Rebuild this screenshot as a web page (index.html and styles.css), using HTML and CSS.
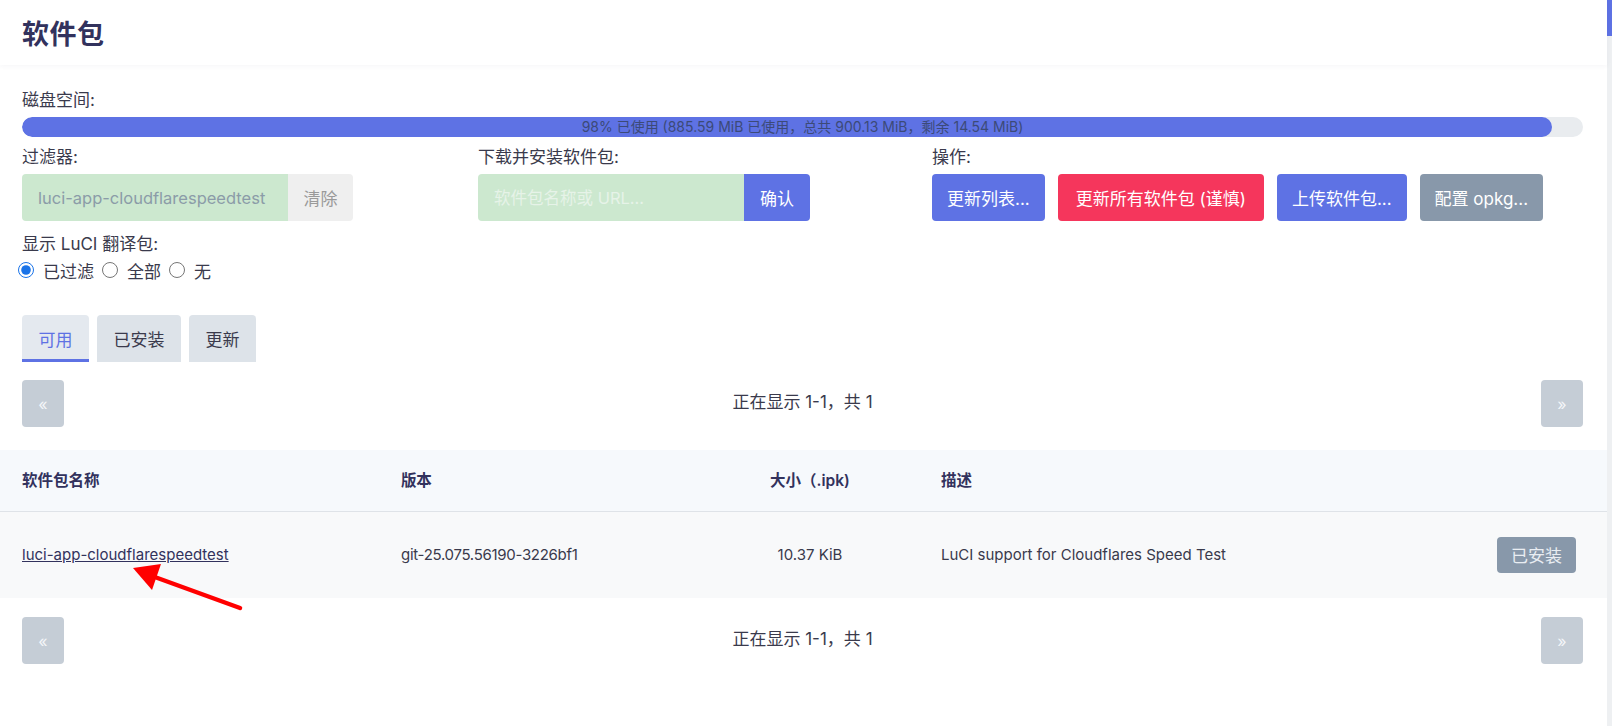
FILE: index.html
```html
<!DOCTYPE html>
<html lang="zh-CN">
<head>
<meta charset="utf-8">
<title>软件包</title>
<link rel="stylesheet" href="styles.css">
</head>
<body>
<div class="app">
  <div class="page">
    <header class="topbar">
      <h2 class="title">软件包</h2>
    </header>

    <div class="content">
      <div class="disk">
        <div class="field-label">磁盘空间:</div>
        <div class="meter">
          <div class="meter-fill" style="width:98%"></div>
          <span class="meter-text">98% 已使用 (885.59 MiB 已使用，总共 900.13 MiB，剩余 14.54 MiB)</span>
        </div>
      </div>

      <div class="controls">
        <div class="ctl">
          <div class="field-label">过滤器:</div>
          <div class="group">
            <input class="txt txt-filter" type="text" value="luci-app-cloudflarespeedtest">
            <button class="btn btn-clear">清除</button>
          </div>
        </div>
        <div class="ctl">
          <div class="field-label">下载并安装软件包:</div>
          <div class="group">
            <input class="txt txt-url" type="text" placeholder="软件包名称或 URL...">
            <button class="btn btn-primary btn-attached">确认</button>
          </div>
        </div>
        <div class="ctl">
          <div class="field-label">操作:</div>
          <div class="actions">
            <button class="btn btn-primary">更新列表...</button>
            <button class="btn btn-danger">更新所有软件包 (谨慎)</button>
            <button class="btn btn-primary">上传软件包...</button>
            <button class="btn btn-neutral">配置 opkg...</button>
          </div>
        </div>
        <div class="ctl ctl-i18n">
          <div class="field-label">显示 LuCI 翻译包:</div>
          <div class="radios">
            <label class="radio"><input type="radio" name="i18n" checked>已过滤</label>
            <label class="radio"><input type="radio" name="i18n">全部</label>
            <label class="radio"><input type="radio" name="i18n">无</label>
          </div>
        </div>
      </div>

      <ul class="tabs">
        <li class="tab active">可用</li>
        <li class="tab">已安装</li>
        <li class="tab">更新</li>
      </ul>

      <div class="pager">
        <button class="btn btn-page">«</button>
        <span class="pager-text">正在显示 1-1，共 1</span>
        <button class="btn btn-page">»</button>
      </div>
    </div>

    <table class="pkg-table">
      <colgroup>
        <col class="c-name">
        <col class="c-ver">
        <col class="c-size">
        <col class="c-desc">
        <col class="c-act">
      </colgroup>
      <thead>
        <tr>
          <th class="col-name">软件包名称</th>
          <th class="col-ver">版本</th>
          <th class="col-size">大小（.ipk)</th>
          <th class="col-desc">描述</th>
          <th class="col-act"></th>
        </tr>
      </thead>
      <tbody>
        <tr>
          <td class="col-name"><a class="pkg-link" href="#">luci-app-cloudflarespeedtest</a></td>
          <td class="col-ver">git-25.075.56190-3226bf1</td>
          <td class="col-size">10.37 KiB</td>
          <td class="col-desc">LuCI support for Cloudflares Speed Test</td>
          <td class="col-act"><button class="btn btn-installed">已安装</button></td>
        </tr>
      </tbody>
    </table>

    <div class="content">
      <div class="pager pager-bottom">
        <button class="btn btn-page">«</button>
        <span class="pager-text">正在显示 1-1，共 1</span>
        <button class="btn btn-page">»</button>
      </div>
    </div>
  </div>

  <div class="scrollbar"><div class="scrollbar-thumb"></div></div>
</div>

<!-- red pointer drawn over the package link -->
<svg class="pointer" width="140" height="60" viewBox="0 0 140 60">
  <line x1="128" y1="49" x2="40" y2="17" stroke="#ff0000" stroke-width="4.5" stroke-linecap="round"/>
  <polygon points="21,9 49,5 40,31" fill="#ff0000"/>
</svg>
</body>
</html>
```

FILE: styles.css
```css
* { box-sizing: border-box; }

html, body {
  margin: 0;
  padding: 0;
  height: 100%;
  overflow: hidden;
}

body {
  font-family: "Inter", "Noto Sans CJK SC", "Noto Sans", sans-serif;
  font-size: 17px;
  color: #32325d;
  background: #ffffff;
}

.app {
  display: flex;
  height: 100%;
}

.page {
  flex: 1;
  min-width: 0;
  background: #ffffff;
}

/* top title bar */
.topbar {
  height: 65px;
  padding: 0 22px;
  display: flex;
  align-items: center;
  background: #ffffff;
  box-shadow: 0 1px 5px rgba(50, 50, 93, 0.05);
  position: relative;
}

.title {
  margin: 0;
  font-size: 27px;
  font-weight: 700;
  color: #32325d;
  letter-spacing: 0.5px;
}

.content {
  padding: 0 24px 0 22px;
}

.field-label {
  line-height: 24px;
  color: #3a3a4c;
}

/* disk usage */
.disk {
  padding-top: 23px;
}

.meter {
  position: relative;
  margin-top: 5px;
  height: 20px;
  border-radius: 10px;
  background: #e9ecef;
  overflow: hidden;
}

.meter-fill {
  height: 100%;
  background: #5e72e4;
  border-radius: 10px;
}

.meter-text {
  position: absolute;
  inset: 0;
  text-align: center;
  font-size: 14px;
  line-height: 20px;
  color: #3c4a78;
}

/* control row */
.controls {
  display: grid;
  grid-template-columns: 456px 454px 1fr;
  margin-top: 8px;
}

.group {
  display: flex;
  margin-top: 5px;
  height: 47px;
}

.txt {
  font: inherit;
  font-size: 16.5px;
  border: none;
  outline: none;
  background: #cce8cf;
  border-radius: 4px 0 0 4px;
  padding: 0 16px;
  height: 47px;
}

.txt-filter {
  width: 266px;
  color: #8b9ca8;
}

.txt-url {
  width: 266px;
  color: #32325d;
}

.txt-url::placeholder {
  color: #e6f3e8;
}

.btn {
  font: inherit;
  font-size: 17px;
  border: none;
  border-radius: 4px;
  cursor: pointer;
  padding: 0 15px;
  height: 47px;
  color: #ffffff;
  white-space: nowrap;
}

.btn-clear {
  background: #efefef;
  color: #9a9a9a;
  border-radius: 0 4px 4px 0;
  width: 65px;
  padding: 0;
}

.btn-attached {
  border-radius: 0 4px 4px 0;
  width: 66px;
  padding: 0;
}

.btn-primary { background: #5e72e4; }
.btn-danger { background: #f5365c; padding: 0 18px; }
.btn-neutral { background: #8898aa; }

.actions {
  display: flex;
  gap: 13px;
  margin-top: 5px;
}

.ctl-i18n {
  grid-column: 1;
  margin-top: 11px;
}

.radios {
  display: flex;
  align-items: center;
  height: 28px;
  gap: 8px;
}

.radio {
  display: inline-flex;
  align-items: center;
  color: #3a3a4c;
}

.radio input {
  width: 16px;
  height: 16px;
  margin: 0 9px 0 0;
  accent-color: #1a73e8;
}

.radio:first-child input {
  margin-left: -4px;
}

/* tabs */
.tabs {
  list-style: none;
  margin: 31px 0 0;
  padding: 0;
  display: flex;
  gap: 8px;
}

.tab {
  height: 47px;
  padding: 0 16.5px;
  display: flex;
  align-items: center;
  background: #dde3e9;
  border-radius: 4px 4px 0 0;
  color: #3a3a4c;
}

.tab.active {
  background: #e4e9ef;
  color: #5e72e4;
  box-shadow: inset 0 -3px 0 #5e72e4;
}

/* pager */
.pager {
  display: flex;
  align-items: center;
  justify-content: space-between;
  margin-top: 18px;
}

.pager-bottom {
  margin-top: 19px;
}

.btn-page {
  width: 42px;
  padding: 0;
  background: #c5cdd6;
  color: #f4f6f9;
  font-size: 16px;
}

.pager-text {
  color: #3a3a4c;
  margin-bottom: 6px;
}

/* package table */
.pkg-table {
  width: 100%;
  margin-top: 23px;
  border-collapse: collapse;
  table-layout: fixed;
  font-size: 15px;
}

.c-name { width: 379px; }
.c-ver { width: 341px; }
.c-size { width: 180px; }
.c-desc { width: auto; }
.c-act { width: 140px; }

.pkg-table th {
  height: 61px;
  background: #f6f9fc;
  border-bottom: 1px solid #dfe3e8;
  text-align: left;
  font-size: 15.5px;
  font-weight: 600;
  color: #32325d;
  padding: 0 22px 3px;
}

.pkg-table td {
  height: 87px;
  background: #f8f9fa;
  padding: 0 22px;
  color: #3a3a4c;
  vertical-align: middle;
}

.pkg-table .col-ver { letter-spacing: -0.3px; }
.pkg-table .col-size { text-align: center; }
.pkg-table .col-desc { padding-left: 41px; }
.pkg-table .col-act { text-align: right; padding-right: 31px; }

.pkg-link {
  color: #32325d;
  text-decoration: underline;
}

.btn-installed {
  height: 36px;
  padding: 0 14px;
  background: #8898aa;
  color: #e9edf2;
}

/* thin themed scrollbar */
.scrollbar {
  width: 5px;
  background: #eef0f2;
}

.scrollbar-thumb {
  height: 36px;
  background: #5e72e4;
}

.pointer {
  position: absolute;
  left: 112px;
  top: 559px;
  pointer-events: none;
}
```
